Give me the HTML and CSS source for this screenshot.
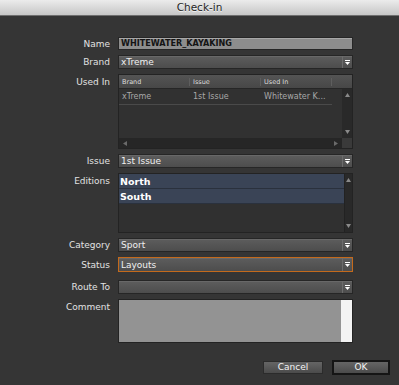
FILE: index.html
```html
<!doctype html>
<html lang="en">

<head>
    <meta charset="utf-8">
    <title>Check-in</title>
    <link rel="stylesheet" href="styles.css">
</head>

<body>
    <div class="titlebar">Check-in</div>

    <div class="form">
        <div class="lbl">Name</div>
        <div class="field name">WHITEWATER_KAYAKING</div>

        <div class="lbl">Brand</div>
        <div class="select"><span class="val">xTreme</span><span class="arrow"><svg width="5" height="5" viewBox="0 0 5 5"><rect x="0" y="0" width="5" height="1" fill="#fff"/><path d="M0 2 L5 2 L2.5 5 Z" fill="#fff"/></svg></span></div>

        <div class="lbl top">Used In</div>
        <div class="table">
            <div class="thead">
                <span class="col">Brand</span>
                <span class="col">Issue</span>
                <span class="col">Used In</span>
                <span class="col rest"></span>
            </div>
            <div class="tbody">
                <div class="rows">
                    <div class="trow">
                        <span class="col">xTreme</span>
                        <span class="col">1st Issue</span>
                        <span class="col">Whitewater K...</span>
                    </div>
                </div>
                <div class="vscroll">
                    <svg width="5" height="4" viewBox="0 0 5 4"><path d="M0 4 L5 4 L2.5 0 Z" fill="#8a8a8a"/></svg>
                    <svg width="5" height="4" viewBox="0 0 5 4"><path d="M0 0 L5 0 L2.5 4 Z" fill="#8a8a8a"/></svg>
                </div>
            </div>
            <div class="hbar">
                <div class="hscroll">
                    <svg width="4" height="5" viewBox="0 0 4 5"><path d="M4 0 L4 5 L0 2.5 Z" fill="#6a6a6a"/></svg>
                    <svg width="4" height="5" viewBox="0 0 4 5"><path d="M0 0 L0 5 L4 2.5 Z" fill="#6a6a6a"/></svg>
                </div>
                <div class="corner"></div>
            </div>
        </div>

        <div class="lbl">Issue</div>
        <div class="select"><span class="val">1st Issue</span><span class="arrow"><svg width="5" height="5" viewBox="0 0 5 5"><rect x="0" y="0" width="5" height="1" fill="#fff"/><path d="M0 2 L5 2 L2.5 5 Z" fill="#fff"/></svg></span></div>

        <div class="lbl top">Editions</div>
        <div class="list">
            <div class="items">
                <div class="erow">North</div>
                <div class="erow">South</div>
            </div>
            <div class="vscroll slim">
                <svg width="5" height="4" viewBox="0 0 5 4"><path d="M0 4 L5 4 L2.5 0 Z" fill="#8a8a8a"/></svg>
                <svg width="5" height="4" viewBox="0 0 5 4"><path d="M0 0 L5 0 L2.5 4 Z" fill="#8a8a8a"/></svg>
            </div>
        </div>

        <div class="lbl">Category</div>
        <div class="select"><span class="val">Sport</span><span class="arrow"><svg width="5" height="5" viewBox="0 0 5 5"><rect x="0" y="0" width="5" height="1" fill="#fff"/><path d="M0 2 L5 2 L2.5 5 Z" fill="#fff"/></svg></span></div>

        <div class="lbl">Status</div>
        <div class="select focus"><span class="val">Layouts</span><span class="arrow"><svg width="5" height="5" viewBox="0 0 5 5"><rect x="0" y="0" width="5" height="1" fill="#fff"/><path d="M0 2 L5 2 L2.5 5 Z" fill="#fff"/></svg></span></div>

        <div class="lbl spaced">Route To</div>
        <div class="select spaced"><span class="val"></span><span class="arrow"><svg width="5" height="5" viewBox="0 0 5 5"><rect x="0" y="0" width="5" height="1" fill="#fff"/><path d="M0 2 L5 2 L2.5 5 Z" fill="#fff"/></svg></span></div>

        <div class="lbl top">Comment</div>
        <div class="comment"><div class="strip"></div></div>
    </div>

    <div class="buttons">
        <div class="btn cancel">Cancel</div>
        <div class="btn ok">OK</div>
    </div>
</body>

</html>
```

FILE: styles.css
```css
        body {
            margin: 0;
            background-color: #353535;
            font-family: "DejaVu Sans", sans-serif;
            font-size: 9px;
            color: #e2e2e2;
        }

        .titlebar {
            height: 15px;
            line-height: 15px;
            text-align: center;
            font-size: 10.5px;
            color: #262626;
            text-shadow: 0 1px 0 #f2f2f2;
            background: linear-gradient(#ececec, #c6c6c6);
            border-bottom: 1px solid #6e6e6e;
        }

        .form {
            display: grid;
            grid-template-columns: 110px 235px;
            column-gap: 8px;
            row-gap: 5px;
            padding-top: 21px;
        }

        .lbl {
            text-align: right;
            align-self: center;
            white-space: nowrap;
        }

        .lbl.top {
            align-self: start;
            padding-top: 3px;
        }

        .spaced {
            margin-top: 3px;
        }

        .field {
            box-sizing: border-box;
            height: 13px;
            border: 1px solid #262626;
        }

        .name {
            background-color: #8d8d8d;
            box-shadow: inset 0 1px 0 #a8a8a8;
            color: #141414;
            font-family: "DejaVu Sans Condensed", "Liberation Sans Narrow", sans-serif;
            font-stretch: condensed;
            font-weight: bold;
            font-size: 9px;
            line-height: 11px;
            padding-left: 2px;
        }

        .select {
            box-sizing: border-box;
            height: 14px;
            display: flex;
            align-items: center;
            border: 1px solid #262626;
            background: linear-gradient(#5d5d5d, #4d4d4d);
            box-shadow: inset 0 1px 0 #686868;
            color: #f0f0f0;
        }

        .select.focus {
            height: 15px;
            border-color: #c46a1c;
        }

        .val {
            flex: 1;
            padding-left: 2px;
        }

        .arrow {
            width: 9px;
            height: 100%;
            display: flex;
            align-items: center;
            justify-content: center;
            border-left: 1px solid #6c6c6c;
        }

        .table {
            box-sizing: border-box;
            height: 75px;
            border: 1px solid #232323;
            background-color: #313131;
            display: flex;
            flex-direction: column;
        }

        .thead {
            height: 14px;
            display: flex;
            align-items: center;
            background: linear-gradient(#545454, #474747);
            border-bottom: 1px solid #262626;
            box-sizing: border-box;
            font-size: 6.5px;
            color: #dcdcdc;
        }

        .col {
            width: 71px;
            box-sizing: border-box;
            padding-left: 3px;
            white-space: nowrap;
        }

        .thead .col {
            border-right: 1px solid #5e5e5e;
        }

        .thead .rest {
            flex: 1;
            border-right: none;
        }

        .tbody {
            flex: 1;
            display: flex;
        }

        .rows {
            flex: 1;
        }

        .trow {
            width: 213px;
            height: 15px;
            display: flex;
            align-items: center;
            border-bottom: 1px solid #4a4a4a;
            font-size: 8px;
            color: #a8a8a8;
        }

        .vscroll {
            width: 10px;
            background-color: #292929;
            display: flex;
            flex-direction: column;
            justify-content: space-between;
            align-items: center;
            padding: 4px 0;
            box-sizing: border-box;
        }

        .vscroll.slim {
            width: 8px;
            border-left: 1px solid #222;
        }

        .hbar {
            height: 10px;
            display: flex;
        }

        .hscroll {
            flex: 1;
            background-color: #262626;
            display: flex;
            justify-content: space-between;
            align-items: center;
            padding: 0 4px;
        }

        .corner {
            width: 10px;
            background-color: #3a3a3a;
        }

        .list {
            box-sizing: border-box;
            height: 60px;
            border: 1px solid #232323;
            background-color: #303030;
            display: flex;
        }

        .items {
            flex: 1;
        }

        .erow {
            height: 15px;
            line-height: 15px;
            box-sizing: border-box;
            background-color: #3a4456;
            border-bottom: 1px solid #2a313d;
            color: #fff;
            font-weight: bold;
            font-size: 9.5px;
            padding-left: 1px;
        }

        .comment {
            box-sizing: border-box;
            height: 44px;
            border: 1px solid #232323;
            background-color: #939393;
            display: flex;
            justify-content: flex-end;
        }

        .strip {
            width: 11px;
            background-color: #f3f3f3;
        }

        .buttons {
            display: flex;
            justify-content: flex-end;
            align-items: center;
            gap: 9px;
            padding-right: 9px;
            margin-top: 17px;
        }

        .btn {
            box-sizing: border-box;
            text-align: center;
            color: #f4f4f4;
            background: linear-gradient(#656565, #4b4b4b);
            border: 1px solid #2b2b2b;
        }

        .cancel {
            width: 60px;
            height: 13px;
            line-height: 11px;
        }

        .ok {
            width: 58px;
            height: 15px;
            line-height: 11px;
            border: 2px solid #151515;
        }
```
